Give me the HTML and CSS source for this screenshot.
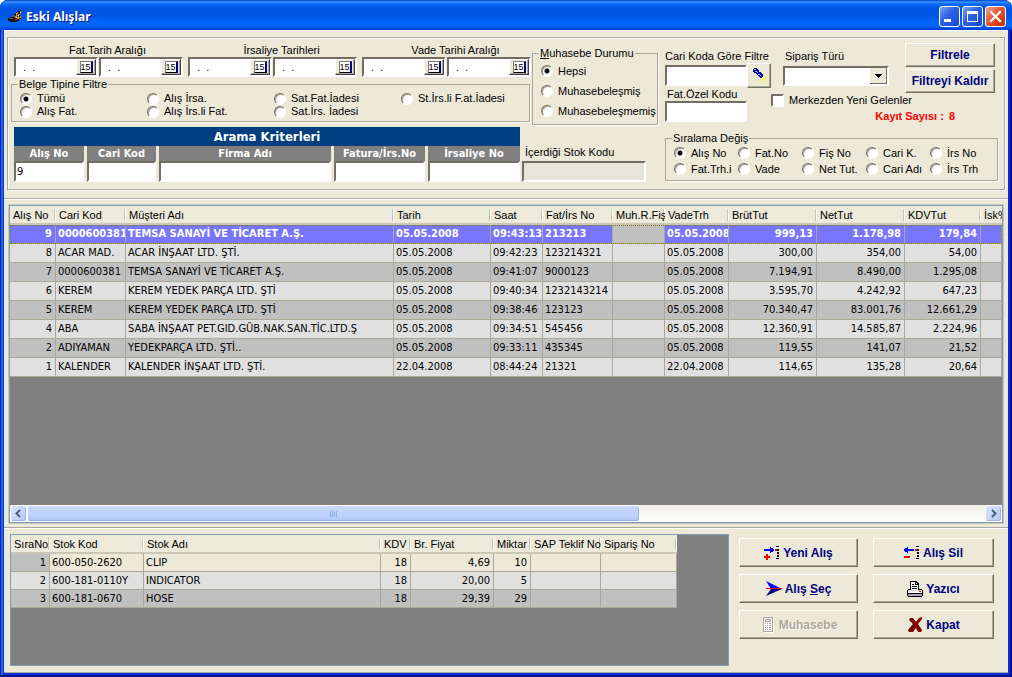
FILE: index.html
```html
<!DOCTYPE html>
<html lang="tr">
<head>
<meta charset="utf-8">
<title>Eski Alışlar</title>
<link rel="stylesheet" href="styles.css">
</head>
<body>
<div class="window">
  <header class="titlebar">
    <svg class="app-icon" viewBox="0 0 14 14" shape-rendering="crispEdges" aria-hidden="true">
      <path d="M0 8h2V7h4V4h2V2h2V1h2V0h1v3h-1v3h1v3h-2v2H9v1H2v-1H0z" fill="#1a1208"/><path d="M8 3h1V2h1v2h2V1h1v3h-1v2h1v2h-2v1H9V8H7V6h1z" fill="#d08a30"/><path d="M6 5h1v2H6zM2 8h3v1H2zM7 9h2v1H7z" fill="#8a5a24"/><path d="M9 4h1v1H9zM11 5h1v2h-1zM9 6h1v1H9z" fill="#302010"/><path d="M10 5h1v1h-1zM8 7h1v1H8zM12 2h1v1h-1z" fill="#ffd070"/>
    </svg>
    <h1>Eski Alışlar</h1>
    <button class="caption" aria-label="Simge durumuna küçült"><svg viewBox="0 0 19 19" shape-rendering="crispEdges"><path d="M4 12h7v3H4z" fill="#fff"/></svg></button>
    <button class="caption" aria-label="Ekranı kapla"><svg viewBox="0 0 19 19" shape-rendering="crispEdges"><path d="M4 4h11v11H4zM5 7v7h9V7z" fill="#fff" fill-rule="evenodd"/></svg></button>
    <button class="caption close" aria-label="Pencereyi kapat"><svg viewBox="0 0 19 19"><path d="M5 5l9 9M14 5l-9 9" stroke="#fff" stroke-width="2.2" stroke-linecap="square"/></svg></button>
  </header>

  <main class="client">
    <section class="filters">
      <div class="filter-box">
        <div class="left-part">
          <div class="left-top">
            <div class="document-filters">
              <div class="date-groups">
                <div class="date-group"><span class="date-title">Fat.Tarih Aralığı</span>
                  <div class="date-pair">
                    <div class="date"><input aria-label="Fat. tarih başlangıç" value="  .  ."><button class="day" aria-label="Takvim"><span>15</span></button></div>
                    <div class="date"><input aria-label="Fat. tarih bitiş" value="  .  ."><button class="day" aria-label="Takvim"><span>15</span></button></div>
                  </div></div>
                <div class="date-group"><span class="date-title">İrsaliye Tarihleri</span>
                  <div class="date-pair">
                    <div class="date"><input aria-label="İrsaliye tarihi başlangıç" value="  .  ."><button class="day" aria-label="Takvim"><span>15</span></button></div>
                    <div class="date"><input aria-label="İrsaliye tarihi bitiş" value="  .  ."><button class="day" aria-label="Takvim"><span>15</span></button></div>
                  </div></div>
                <div class="date-group"><span class="date-title">Vade Tarihi Aralığı</span>
                  <div class="date-pair">
                    <div class="date"><input aria-label="Vade tarihi başlangıç" value="  .  ."><button class="day" aria-label="Takvim"><span>15</span></button></div>
                    <div class="date"><input aria-label="Vade tarihi bitiş" value="  .  ."><button class="day" aria-label="Takvim"><span>15</span></button></div>
                  </div></div>
              </div>
              <fieldset class="group doc-type">
                <legend>Belge Tipine Filtre</legend>
                <label><input type="radio" name="belge" checked>Tümü</label>
                <label><input type="radio" name="belge">Alış İrsa.</label>
                <label><input type="radio" name="belge">Sat.Fat.İadesi</label>
                <label><input type="radio" name="belge">St.İrs.li F.at.İadesi</label>
                <label><input type="radio" name="belge">Alış Fat.</label>
                <label><input type="radio" name="belge">Alış İrs.li Fat.</label>
                <label><input type="radio" name="belge">Sat.İrs. İadesi</label>
              </fieldset>
            </div>
            <fieldset class="group accounting">
              <legend><u>M</u>uhasebe Durumu</legend>
              <label><input type="radio" name="muh" checked>Hepsi</label>
              <label><input type="radio" name="muh">Muhasebeleşmiş</label>
              <label><input type="radio" name="muh">Muhasebeleşmemiş</label>
            </fieldset>
          </div>
          <div class="left-bottom">
            <div class="search">
              <h2>Arama Kriterleri</h2>
              <label>Alış No<input value="9"></label>
              <label>Cari Kod<input></label>
              <label>Firma Adı<input></label>
              <label>Fatura/İrs.No<input></label>
              <label>İrsaliye No<input></label>
            </div>
            <div class="stock">
              <label for="stok">İçerdiği Stok Kodu</label>
              <input id="stok" class="field" disabled>
            </div>
          </div>
        </div>

        <div class="right-part">
          <div class="right-top">
            <div class="codes">
              <label for="cari">Cari Koda Göre Filtre</label>
              <div class="lookup">
                <input id="cari" class="field">
                <button class="push torch" aria-label="Ara"><svg viewBox="0 0 17 18" shape-rendering="crispEdges"><path d="M3 1h3v1h1v1h1v2h2v1h1v1h1v3h-1v1H9v-1H8V9H7V8H6V7H5V6H3V5H2V2h1z" fill="#0000a0"/><path d="M3 2h2v1H3zM4 4h2v1H4zM6 5h1v1H6zM7 7h2v1H7zM9 8h1v1H9z" fill="#8fd0ff"/><path d="M12 8h1v1h-1zM14 9h1v1h-1zM11 11h2v1h-2zM14 11h1v2h-1zM9 12h1v1H9zM11 13h1v1h-1zM13 14h2v1h-2zM9 15h1v1H9zM11 16h1v1h-1zM15 16h1v1h-1zM7 13h1v1H7zM16 10h1v1h-1z" fill="#ffee22"/></svg></button>
              </div>
              <label for="ozel" class="special">Fat.Özel Kodu</label>
              <input id="ozel" class="field">
            </div>
            <div class="order-side">
              <div class="order-row">
                <div class="order">
                  <label for="tur">Sipariş Türü</label>
                  <select id="tur" class="drop"><option></option></select>
                </div>
                <div class="filter-actions">
                  <button class="push">Filtrele</button>
                  <button class="push">Filtreyi Kaldır</button>
                </div>
              </div>
              <label class="check"><input type="checkbox">Merkezden Yeni Gelenler</label>
              <p class="count">Kayıt Sayısı : <span>8</span></p>
            </div>
          </div>
          <fieldset class="group sorting">
            <legend>Sıralama Değiş</legend>
            <label><input type="radio" name="sira" checked>Alış No</label>
            <label><input type="radio" name="sira">Fat.No</label>
            <label><input type="radio" name="sira">Fiş No</label>
            <label><input type="radio" name="sira">Cari K.</label>
            <label><input type="radio" name="sira">İrs No</label>
            <label><input type="radio" name="sira">Fat.Trh.i</label>
            <label><input type="radio" name="sira">Vade</label>
            <label><input type="radio" name="sira">Net Tut.</label>
            <label><input type="radio" name="sira">Cari Adı</label>
            <label><input type="radio" name="sira">İrs Trh</label>
          </fieldset>
        </div>
      </div>
    </section>

    <section class="invoices">
      <div class="grid-frame">
        <div class="grid-view">
          <table class="grid main-grid">
            <colgroup><col class="w46"><col class="w70"><col class="w268"><col class="w97"><col class="w52"><col class="w70"><col class="w52"><col class="w64"><col class="w88"><col class="w88"><col class="w76"><col></colgroup>
            <thead><tr><th>Alış No</th><th>Cari Kod</th><th>Müşteri Adı</th><th>Tarih</th><th>Saat</th><th>Fat/İrs No</th><th>Muh.R.Fiş</th><th>VadeTrh</th><th>BrütTut</th><th>NetTut</th><th>KDVTut</th><th>İsk%</th></tr></thead>
            <tbody>
              <tr class="selected"><td class="num">9</td><td>0000600381</td><td>TEMSA SANAYİ VE TİCARET A.Ş.</td><td>05.05.2008</td><td>09:43:13</td><td>213213</td><td class="current"></td><td>05.05.2008</td><td class="num">999,13</td><td class="num">1.178,98</td><td class="num">179,84</td><td></td></tr>
              <tr><td class="num">8</td><td>ACAR MAD.</td><td>ACAR İNŞAAT LTD. ŞTİ.</td><td>05.05.2008</td><td>09:42:23</td><td>123214321</td><td></td><td>05.05.2008</td><td class="num">300,00</td><td class="num">354,00</td><td class="num">54,00</td><td></td></tr>
              <tr><td class="num">7</td><td>0000600381</td><td>TEMSA SANAYİ VE TİCARET A.Ş.</td><td>05.05.2008</td><td>09:41:07</td><td>9000123</td><td></td><td>05.05.2008</td><td class="num">7.194,91</td><td class="num">8.490,00</td><td class="num">1.295,08</td><td></td></tr>
              <tr><td class="num">6</td><td>KEREM</td><td>KEREM YEDEK PARÇA LTD. ŞTİ</td><td>05.05.2008</td><td>09:40:34</td><td>1232143214</td><td></td><td>05.05.2008</td><td class="num">3.595,70</td><td class="num">4.242,92</td><td class="num">647,23</td><td></td></tr>
              <tr><td class="num">5</td><td>KEREM</td><td>KEREM YEDEK PARÇA LTD. ŞTİ</td><td>05.05.2008</td><td>09:38:46</td><td>123123</td><td></td><td>05.05.2008</td><td class="num">70.340,47</td><td class="num">83.001,76</td><td class="num">12.661,29</td><td></td></tr>
              <tr><td class="num">4</td><td>ABA</td><td>SABA İNŞAAT PET.GID.GÜB.NAK.SAN.TİC.LTD.Ş</td><td>05.05.2008</td><td>09:34:51</td><td>545456</td><td></td><td>05.05.2008</td><td class="num">12.360,91</td><td class="num">14.585,87</td><td class="num">2.224,96</td><td></td></tr>
              <tr><td class="num">2</td><td>ADIYAMAN</td><td>YEDEKPARÇA LTD. ŞTİ..</td><td>05.05.2008</td><td>09:33:11</td><td>435345</td><td></td><td>05.05.2008</td><td class="num">119,55</td><td class="num">141,07</td><td class="num">21,52</td><td></td></tr>
              <tr><td class="num">1</td><td>KALENDER</td><td>KALENDER İNŞAAT LTD. ŞTİ.</td><td>22.04.2008</td><td>08:44:24</td><td>21321</td><td></td><td>22.04.2008</td><td class="num">114,65</td><td class="num">135,28</td><td class="num">20,64</td><td></td></tr>
            </tbody>
          </table>
        </div>
        <div class="scrollbar">
          <button class="arrow" aria-label="Sola kaydır"><svg viewBox="0 0 9 9"><path d="M6 1L2.500 4.500 6 8" fill="none" stroke="#4d6185" stroke-width="2"/></svg></button>
          <div class="track"><div class="thumb"><span></span><span></span><span></span><span></span></div></div>
          <button class="arrow" aria-label="Sağa kaydır"><svg viewBox="0 0 9 9"><path d="M3 1l3.500 3.500L3 8" fill="none" stroke="#4d6185" stroke-width="2"/></svg></button>
        </div>
      </div>
    </section>

    <section class="details">
      <div class="detail-frame">
        <table class="grid detail-grid">
          <colgroup><col class="w39"><col class="w94"><col class="w237"><col class="w30"><col class="w83"><col class="w37"><col class="w70"><col class="w76"></colgroup>
          <thead><tr><th>SıraNo</th><th>Stok Kod</th><th>Stok Adı</th><th>KDV</th><th>Br. Fiyat</th><th>Miktar</th><th>SAP Teklif No</th><th>Sipariş No</th></tr></thead>
          <tbody>
            <tr class="active"><td class="num">1</td><td>600-050-2620</td><td>CLIP</td><td class="num">18</td><td class="num">4,69</td><td class="num">10</td><td></td><td></td></tr>
            <tr><td class="num">2</td><td>600-181-0110Y</td><td>INDICATOR</td><td class="num">18</td><td class="num">20,00</td><td class="num">5</td><td></td><td></td></tr>
            <tr><td class="num">3</td><td>600-181-0670</td><td>HOSE</td><td class="num">18</td><td class="num">29,39</td><td class="num">29</td><td></td><td></td></tr>
          </tbody>
        </table>
      </div>
      <div class="actions">
        <button class="push"><svg class="i16" viewBox="0 0 16 16" shape-rendering="crispEdges"><path d="M0 4h6V2h1v1h2v1h1v2H9v1H7v1H6V6H0z" fill="#00f"/><path d="M2 9h2v2h2v2H4v2H2v-2H0v-2h2z" fill="red"/><path d="M12 1h3v1h-3zM13 4h2v2h-2zM13 7h2v2h-2zM13 10h2v2h-2zM12 13h3v1h-3z"/><path d="M11 4h2v2h-2z" fill="red"/></svg>Yeni Alış</button>
        <button class="push"><svg class="i16" viewBox="0 0 16 16" shape-rendering="crispEdges"><path d="M10 4H4V2H3v1H1v1H0v2h1v1h2v1h1V6h6z" fill="#00f"/><path d="M0 11h6v2H0z" fill="red"/><path d="M12 1h3v1h-3zM13 4h2v2h-2zM13 7h2v2h-2zM13 10h2v2h-2zM12 13h3v1h-3z"/><path d="M11 4h2v2h-2z" fill="red"/></svg>Alış Sil</button>
        <button class="push"><svg class="i16" viewBox="0 0 16 16"><path d="M0 0l16 8H5z" fill="#00f"/><path d="M5 8h11L0 15z" fill="#000080"/><path d="M0 7h16v1H0z" fill="red"/></svg><span>Alış <u>S</u>eç</span></button>
        <button class="push"><svg class="i16" viewBox="0 0 16 16" shape-rendering="crispEdges"><path d="M3 8V0h6l3 3v5h3v1h1v6h-1v1H1v-1H0V9h1V8z"/><path d="M4 1h4v3h3v5H4zM1 10h14v2H1z" fill="#fff"/><path d="M9 2h1v1H9z" fill="#fff"/><path d="M5 3h2v1H5zM5 5h5v1H5zM5 7h5v1H5z"/><path d="M1 9h14v1H1z" fill="#d0d0d0"/><path d="M1 13h14v2H1z" fill="#aaa8b8"/><path d="M12 10h2v1h-2z" fill="red"/></svg>Yazıcı</button>
        <button class="push" disabled><svg class="i16" viewBox="0 0 16 16" shape-rendering="crispEdges"><path d="M4 1h10v15H4z" fill="#fff"/><path d="M3 0h10v15H3zM4 1v13h8V1z" fill="#aca899" fill-rule="evenodd"/><path d="M5 2h6v3H5zM6 3v1h4V3zM5 6h1v1H5zM7 6h1v1H7zM9 6h2v1H9zM5 8h1v1H5zM7 8h1v1H7zM9 8h2v1H9zM5 10h1v1H5zM7 10h1v1H7zM9 10h2v1H9zM5 12h1v1H5zM7 12h1v1H7zM9 12h2v1H9z" fill="#aca899" fill-rule="evenodd"/></svg>Muhasebe</button>
        <button class="push"><svg class="i16" viewBox="0 0 16 16"><path d="M3 1h3l3 4 3-4 3-1v2l-4 5 4 6-1 2h-3l-2-4-3 4H2l-1-2 5-6-4-4z" fill="#7b0000"/><path d="M4 2l4 5M13 1l-4 5" stroke="#c00000" fill="none"/></svg>Kapat</button>
      </div>
    </section>
  </main>
</div>
</body>
</html>
```
FILE: styles.css
```css
* { box-sizing: border-box; }

body {
  margin: 0;
  background: #fff;
  color: #000;
  font: 11px/13px "Liberation Sans", Arial, sans-serif;
}

button, input, select { font: inherit; color: inherit; margin: 0; padding: 0; }
h1, h2, p { margin: 0; }
svg { display: block; flex: none; }

.window {
  display: flex;
  flex-direction: column;
  min-height: 100vh;
  padding: 0 4px 4px;
  border-radius: 8px 8px 0 0;
  background: #0831d9;
  box-shadow: inset 1px 0 #001ea0, inset -2px -2px #00138c, inset 3px 0 #166aee;
}

/* Title bar */
.titlebar {
  display: flex;
  align-items: center;
  gap: 2px;
  height: 30px;
  margin: 0 -4px;
  padding: 3px 6px 0 8px;
  border-radius: 8px 8px 0 0;
  background: linear-gradient(#0040c8 0, #3a93ff 2px, #0a6af8 4px, #0054e3 8px, #0055e5 16px, #0266fa 22px, #0266ff 26px, #003dd0 30px);
}
.app-icon { width: 14px; height: 14px; }
.titlebar h1 {
  flex: 1;
  padding-left: 2px;
  color: #fff;
  font: bold 12px/16px "Noto Sans", sans-serif;
  text-shadow: 1px 1px #0a1883;
}
.caption {
  width: 21px;
  height: 21px;
  border: 1px solid #fff;
  border-radius: 3px;
  background: linear-gradient(135deg, #7ca4f4, #2a5fe0 45%, #2158dd 70%, #1c46bc);
}
.caption.close {
  background: linear-gradient(135deg, #f0a48c, #e05a38 45%, #d8441c 70%, #b83208);
}

/* Client area */
.client { flex: 1; display: flex; flex-direction: column; background: #ece9d8; }

.filters { padding: 6px 3px 8px; border-top: 1px solid #fff; border-bottom: 1px solid #aca899; }
.filter-box {
  display: flex;
  gap: 7px;
  padding: 4px 6px 7px 3px;
  border: 1px solid #aca899;
  box-shadow: inset 1px 1px #fff, 1px 1px #fff;
}

.left-part { flex: none; width: 647px; }
.left-top { display: flex; gap: 2px; padding-bottom: 2px; }
.document-filters { flex: none; width: 519px; }
.date-groups { display: flex; gap: 5px; padding: 2px 0 0 3px; }
.date-title { display: block; padding-left: 18px; text-align: center; }
.date-pair { display: flex; gap: 1px; }
.date {
  display: flex;
  width: 84px;
  height: 20px;
  border: 2px solid;
  border-color: #716f64 #fff #fff #716f64;
  background: #fff;
}
.date input { width: 0; flex: 1; padding-left: 1px; border: 0; background: none; white-space: pre; }
.day {
  display: grid;
  place-items: center;
  width: 20px;
  border: 1px solid;
  border-color: #fff #404040 #404040 #fff;
  background: #ece9d8;
  box-shadow: inset -1px -1px #aca899;
}
.day span {
  width: 13px;
  height: 12px;
  border: 1px solid #808080;
  border-right: 2px solid #00008b;
  border-bottom-color: #000;
  background: #fff;
  font-size: 9px;
  line-height: 10px;
  text-align: center;
}

/* Group boxes */
.group {
  min-width: 0;
  margin: 0;
  border: 1px solid #aca899;
  box-shadow: 1px 1px #fff;
}
.group legend { margin-left: -2px; padding: 0 1px; background: #ece9d8; line-height: 13px; }
.group label { display: flex; align-items: center; gap: 5px; white-space: nowrap; }
.doc-type {
  display: grid;
  grid-template-columns: repeat(4, 127px);
  margin-top: 1px;
  padding: 1px 0 3px 8px;
}
.doc-type label { height: 13px; }
.accounting {
  flex: 1;
  margin-top: 5px;
  padding: 1px 0 3px 8px;
}
.accounting label { height: 20px; }
.sorting {
  display: grid;
  grid-template-columns: repeat(5, 64px);
  padding: 0 0 3px 8px;
}
.sorting label { height: 16px; }

input[type="radio"] {
  appearance: none;
  flex: none;
  width: 12px;
  height: 12px;
  border: 1px solid;
  border-color: #716f64 #fff #fff #716f64;
  border-radius: 50%;
  background: #fff;
  box-shadow: inset 1px 1px #aca899;
}
input[type="radio"]:checked { background: radial-gradient(circle, #000 2px, #fff 3px); }
input[type="checkbox"] {
  appearance: none;
  flex: none;
  width: 13px;
  height: 13px;
  border: 2px solid;
  border-color: #716f64 #fff #fff #716f64;
  background: #fff;
}

.field, .search input {
  display: block;
  width: 100%;
  height: 21px;
  padding: 0 1px;
  border: 2px solid;
  border-color: #716f64 #fff #fff #716f64;
  background: #fff;
}
.field:disabled { background: #e6e5da; }

/* Search criteria */
.left-bottom { display: flex; align-items: flex-end; gap: 2px; padding-left: 3px; }
.search {
  display: grid;
  grid-template-columns: 70px 69px 172px 91px 92px;
  column-gap: 3px;
}
.search h2 {
  grid-column: 1 / -1;
  background: #003f7f;
  color: #fff;
  font: bold 13px/19px "DejaVu Sans Condensed", "DejaVu Sans", sans-serif;
  text-align: center;
}
.search label {
  background: #808080;
  color: #fff;
  font: bold 11px/15px "DejaVu Sans Condensed", "DejaVu Sans", sans-serif;
  text-align: center;
}
.search input { color: #000; font: 11px/15px "DejaVu Sans Condensed", "DejaVu Sans", sans-serif; }
.stock { width: 124px; }
.stock label { display: block; padding-left: 3px; line-height: 17px; }

/* Right side of the filters */
.right-part {
  flex: 1;
  display: flex;
  flex-direction: column;
  justify-content: space-between;
  padding-bottom: 1px;
}
.right-top { display: flex; }
.codes { width: 106px; padding-top: 8px; white-space: nowrap; }
.codes label, .order label { display: block; }
.codes .special { padding-left: 2px; }
.codes .field { width: 82px; }
.lookup { display: flex; align-items: center; }
.push {
  display: flex;
  align-items: center;
  justify-content: center;
  gap: 3px;
  border: 1px solid;
  border-color: #fff #716f64 #716f64 #fff;
  background: #ece9d8;
  box-shadow: inset -1px -1px #aca899;
  color: #000080;
  font: bold 12px/14px "Liberation Sans", Arial, sans-serif;
  white-space: nowrap;
}
.torch { width: 24px; height: 25px; }
.torch svg { width: 17px; height: 18px; }
.order-side { flex: 1; }
.order-row { display: flex; justify-content: space-between; padding: 1px 3px 0 12px; }
.order { width: 106px; padding-top: 7px; }
.order label { padding: 0 0 3px 2px; }
.drop {
  appearance: none;
  width: 100%;
  height: 20px;
  border: 2px solid;
  border-color: #716f64 #fff #fff #716f64;
  border-radius: 0;
  background:
    linear-gradient(#000, #000) right 5px top 6px / 7px 1px no-repeat,
    linear-gradient(#000, #000) right 6px top 7px / 5px 1px no-repeat,
    linear-gradient(#000, #000) right 7px top 8px / 3px 1px no-repeat,
    linear-gradient(#000, #000) right 8px top 9px / 1px 1px no-repeat,
    linear-gradient(#716f64, #716f64) right 0 bottom 0 / 17px 1px no-repeat,
    linear-gradient(#716f64, #716f64) right 0 top 0 / 1px 100% no-repeat,
    linear-gradient(#ece9d8, #ece9d8) right 0 top 0 / 17px 100% no-repeat,
    #fff;
}
.filter-actions { display: grid; gap: 2px; width: 90px; }
.filter-actions .push { height: 24px; }
.check { display: flex; align-items: center; gap: 5px; padding-top: 1px; }
.count { padding: 3px 43px 0 0; color: #f00; font-weight: bold; text-align: right; }
.count span { padding-left: 2px; }

/* Grids */
.invoices {
  flex: 1;
  display: flex;
  padding: 5px 5px 4px;
  border-top: 1px solid #fff;
  border-bottom: 1px solid #aca899;
}
.grid-frame {
  flex: 1;
  min-width: 0;
  display: flex;
  flex-direction: column;
  border: 1px solid #7f9db9;
  outline: 1px solid #c9c7ba;
  background: #808080;
}
.grid-view { flex: 1; overflow: hidden; }
.grid {
  table-layout: fixed;
  border-collapse: separate;
  border-spacing: 0;
}
.main-grid { width: 100%; }
.detail-grid { width: 666px; }
.grid th, .grid td { padding: 0 3px 0 2px; overflow: hidden; white-space: nowrap; text-align: left; }
.grid th {
  height: 19px;
  padding: 1px 2px 0 3px;
  border-bottom: 2px solid #cbc7b8;
  background:
    linear-gradient(#fff, #fff) right 0 top 3px / 1px 12px no-repeat,
    linear-gradient(#c7c5b2, #c7c5b2) right 1px top 3px / 1px 12px no-repeat,
    #ebeadb;
  font-weight: normal;
  line-height: 16px;
}
.main-grid th:last-child { padding-right: 0; background: #ebeadb; }
.grid td {
  height: 19px;
  border-right: 1px solid #aca899;
  border-bottom: 1px solid #aca899;
  background: #e0e0e0;
  font: 11px/18px "DejaVu Sans Condensed", "DejaVu Sans", sans-serif;
}
.detail-grid td { height: 18px; line-height: 17px; }
.grid td.num { text-align: right; }
.grid tr:nth-child(odd) td { background: #c0c0c0; }
.grid tr.selected td { background: #7876ff; color: #fff; font-weight: bold; }
.grid tr.selected { outline: 1px dotted #808000; outline-offset: -1px; }
.grid tr.selected td.current { background: #c0c0c0; }
.grid tr.active td:not(:first-child) { background: #ece9d8; }

.w30 { width: 30px; } .w37 { width: 37px; } .w39 { width: 39px; } .w46 { width: 46px; }
.w52 { width: 52px; } .w64 { width: 64px; } .w70 { width: 70px; } .w76 { width: 76px; }
.w83 { width: 83px; } .w88 { width: 88px; } .w94 { width: 94px; } .w97 { width: 97px; }
.w237 { width: 237px; } .w268 { width: 268px; }

/* Scroll bar */
.scrollbar { display: flex; height: 17px; background: linear-gradient(#f0eee6, #fefefb); }
.arrow {
  display: grid;
  place-items: center;
  width: 17px;
  border: 1px solid #fff;
  border-radius: 3px;
  background: linear-gradient(135deg, #dce6ff, #b4c8f6);
  box-shadow: inset -1px -1px #9db5ea;
}
.arrow svg { width: 9px; height: 9px; }
.track { flex: 1; }
.thumb {
  display: flex;
  align-items: center;
  justify-content: center;
  gap: 1px;
  width: 64%;
  height: 17px;
  border: 1px solid #fff;
  border-radius: 3px;
  background: linear-gradient(#c9d7ff, #bdd0fd 70%, #b0c6f6);
  box-shadow: inset -1px -1px #98b0e4;
}
.thumb span { width: 1px; height: 6px; background: #8cb0f8; }

/* Lower part */
.details {
  display: flex;
  gap: 10px;
  padding: 5px 14px 6px 6px;
  border-top: 1px solid #fff;
  border-bottom: 1px solid #aca899;
}
.detail-frame { flex: 1; min-height: 132px; border: 1px solid #7f9db9; background: #808080; }
.actions {
  display: grid;
  grid-template-columns: 119px 121px;
  grid-auto-rows: 29px;
  gap: 7px 15px;
  align-content: start;
  padding-top: 4px;
}
.i16 { width: 16px; height: 16px; }
.push:disabled { color: #aca899; text-shadow: 1px 1px #fff; }
```
